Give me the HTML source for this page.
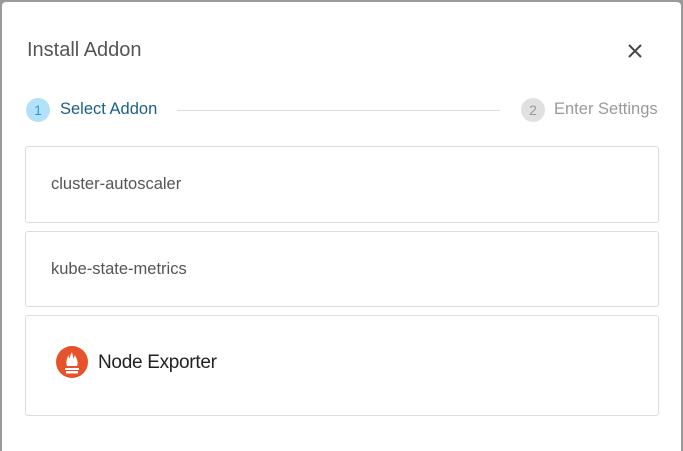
<!DOCTYPE html>
<html><head><style>
body{margin:0;width:683px;height:451px;background:#9a9a9a;font-family:"Liberation Sans",sans-serif;position:relative;overflow:hidden}
.m{position:absolute;left:2px;top:2px;width:679px;height:449px;background:#fff;border-radius:4px 4px 0 0}
.t{position:absolute;left:25px;top:37px;font-size:20px;color:#555}
.x{position:absolute;left:626px;top:42px}
.c{position:absolute;width:24px;height:24px;border-radius:50%;font-size:14px;text-align:center;line-height:24px}
.card{position:absolute;left:23px;width:632px;border:1px solid #ddd;border-radius:3px;background:#fff}
.card span{position:absolute;left:25px;font-size:16.5px;color:#555}
</style></head><body>
<div class="m">
<div class="t">Install Addon</div>
<svg class="x" width="14" height="14" viewBox="0 0 14 14"><path d="M1 1L13 13M13 1L1 13" stroke="#444" stroke-width="2"/></svg>
<div class="c" style="left:24px;top:96px;background:#b3e1fa;color:#2a9bd8">1</div>
<div style="position:absolute;left:58px;top:98px;font-size:16.5px;color:#1b5e8a">Select Addon</div>
<div style="position:absolute;left:175px;top:108px;width:323px;height:1px;background:#ddd"></div>
<div class="c" style="left:519px;top:96px;background:#e0e0e0;color:#999">2</div>
<div style="position:absolute;left:552px;top:98px;font-size:16.5px;color:#999">Enter Settings</div>
<div class="card" style="top:144px;height:75px"><span style="top:28px">cluster-autoscaler</span></div>
<div class="card" style="top:229px;height:74px"><span style="top:28px">kube-state-metrics</span></div>
<div class="card" style="top:313px;height:99px">
<svg style="position:absolute;left:30px;top:30px" width="32" height="32" viewBox="0 0 32 32"><circle cx="16" cy="16" r="16" fill="#e6522c"/><path d="M9 22h14v2H9zM10 25h12v2.5H10zM11 20h10c2-4-1-8-2-11-1 2-1 3-2 3 0-3-1-5-1-6-1 2-2 3-2 6-1 0-1-1-2-3 0 3-3 6-1 11z" fill="#fff"/></svg>
<span style="left:72px;top:36px;font-size:19px;color:#222;letter-spacing:-0.3px">Node Exporter</span></div>
</div>
</body></html>
